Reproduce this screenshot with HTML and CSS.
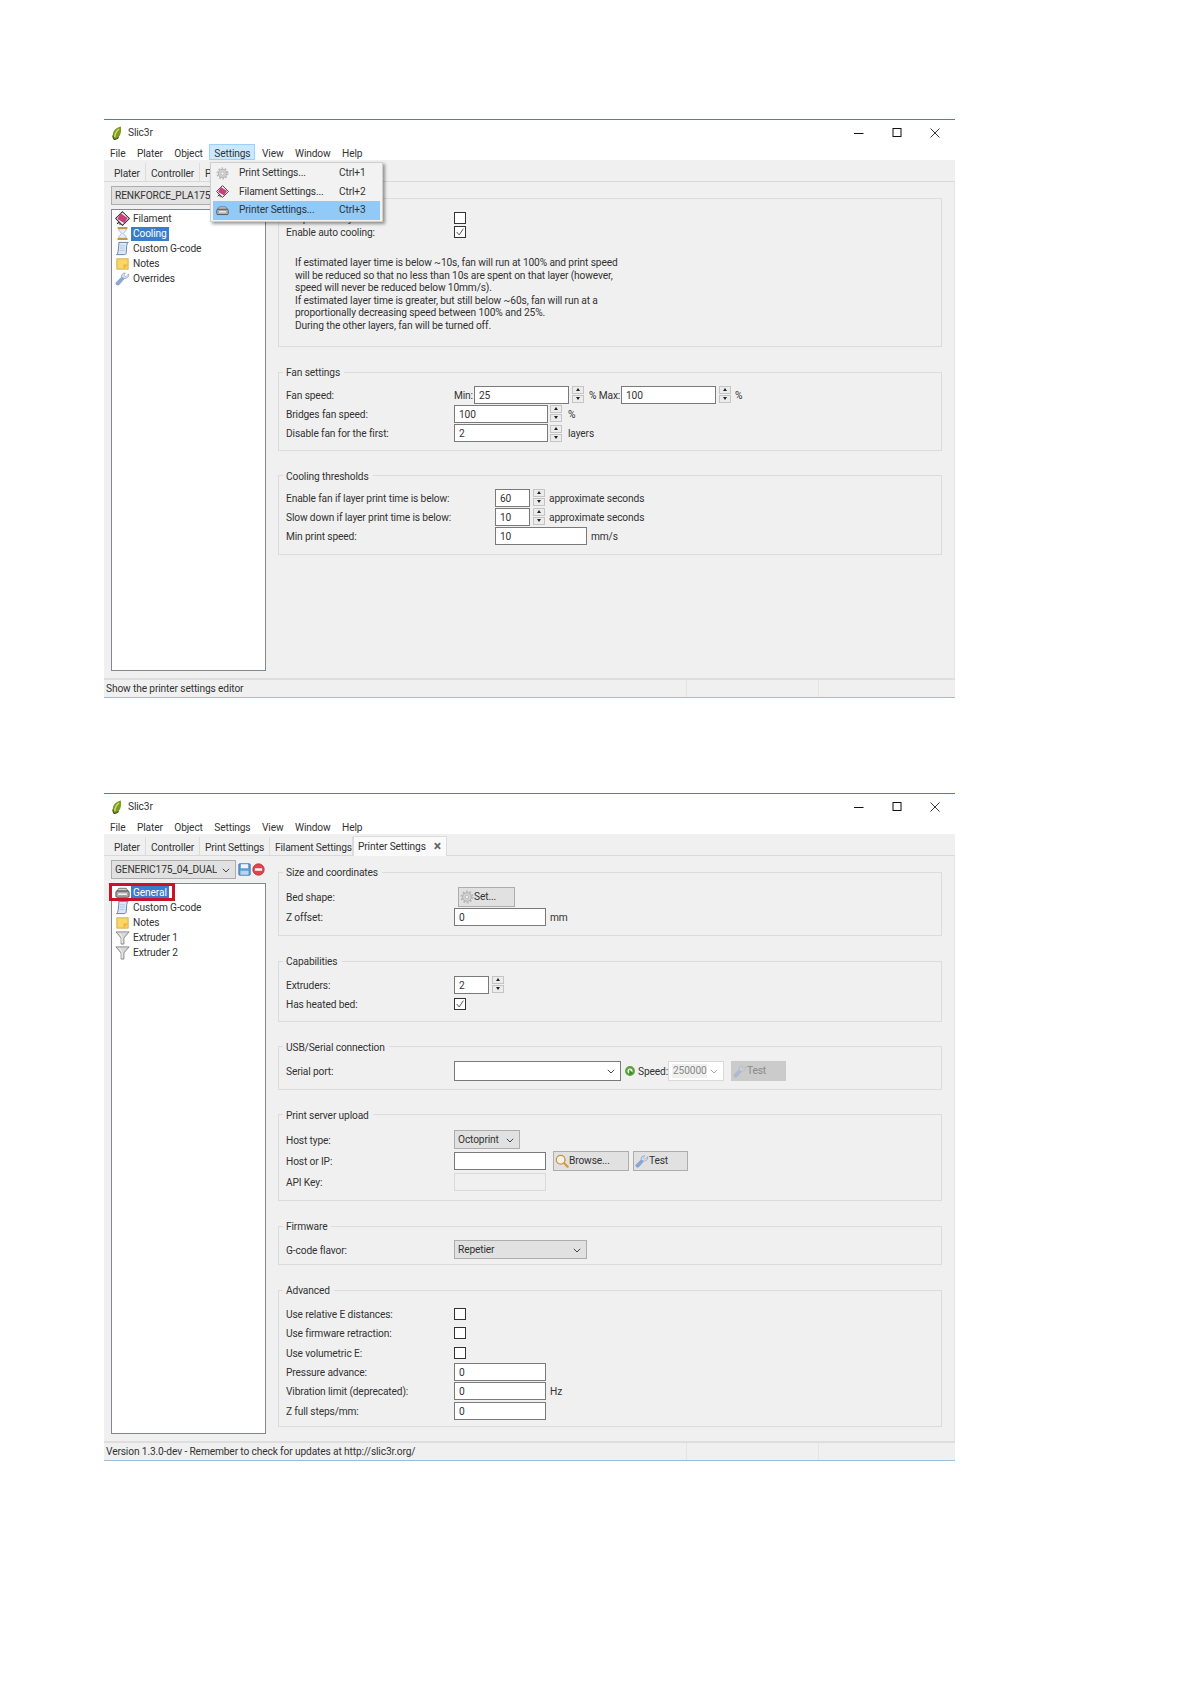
FILE: index.html
```html
<!DOCTYPE html>
<html lang="en">
<head>
<meta charset="utf-8">
<title>Slic3r settings</title>
<link rel="stylesheet" href="styles.css">
</head>
<body>
<svg class="defs" width="0" height="0" aria-hidden="true">
  <symbol id="i-leaf" viewBox="0 0 10 14"><path d="M8.800.5C4 1.500.5 5 .8 9.500c.1 2 .7 3.300 1.500 4 4.700-.5 7.800-6 6.500-13z" fill="#7d9a22"/><path d="M7 3C4.500 5 3 8 2.800 11" stroke="#d0dc70" stroke-width="1.500" fill="none"/><path d="M.8 9.500c.1 2 .7 3.300 1.500 4 1.700-.2 3.100-1 4.300-2.200" stroke="#3f4f14" stroke-width="1.200" fill="none"/></symbol>
  <symbol id="i-filament" viewBox="0 0 16 16"><path d="M8 .8 15.2 8 8 15.2.8 8z" fill="#fff" stroke="#222" stroke-width="1.100"/><path d="M6 2.500 13.500 7.500 10 13 2.500 8.500z" fill="#c93f7c"/><path d="M3 12l3 3M2 14l2-2" stroke="#222"/></symbol>
  <symbol id="i-hourglass" viewBox="0 0 16 16"><path d="M4 3h8v1.500L8.800 8 12 11.500V13H4v-1.500L7.200 8 4 4.500z" fill="#e8eef8" stroke="#8fa8cf" stroke-width=".8"/><rect x="2.500" y="1" width="11" height="2.200" rx="1" fill="#c9964f"/><rect x="2.500" y="12.800" width="11" height="2.200" rx="1" fill="#c9964f"/></symbol>
  <symbol id="i-scroll" viewBox="0 0 16 16"><path d="M4 1.500h10c-1 1-1.500 2-1.500 3.500L12 12.500c-.2 1.500-1 2-2 2H1.500c1-.5 1.500-1.500 1.700-3L4 5C4.100 3.500 4 2.500 4 1.500z" fill="#dbe7f6" stroke="#5d7fae"/><path d="M5.500 5h5M5.200 7.500h5M5 10h5" stroke="#9fb6d6" stroke-width=".7"/></symbol>
  <symbol id="i-note" viewBox="0 0 16 16"><rect x="2" y="3" width="12" height="11" fill="#f7d765" stroke="#dca94a"/><path d="M14 9l-5 5V9z" fill="#f2b63c"/></symbol>
  <symbol id="i-wrench" viewBox="0 0 16 16"><path d="M3 15c-1.500 0-2.500-1.200-2-2.500l6-6c-.5-2 1-4.500 4-4.500L9.500 4l1 2 2-.5L14.500 3c.5 3-2 5.500-4.500 5L4.500 14.500c-.4.400-1 .5-1.500.5z" fill="#8ba7d4" stroke="#6c88b7" stroke-width=".5"/><path d="M7.500 6.500c-.5-2 1-4 3-4.200L9.500 4l1 2 2-.5 1.500-2c.4 2-1 4-3 4.400z" fill="#d8dde6"/></symbol>
  <symbol id="i-printer" viewBox="0 0 16 16"><path d="M4 3.500h8l2 3H2z" fill="#cfcfcf" stroke="#555" stroke-width=".8"/><rect x="1" y="6.500" width="14" height="6.500" rx="1" fill="#b9b9b9" stroke="#444"/><rect x="3" y="8.500" width="10" height="2.500" fill="#f0f0f0" stroke="#777" stroke-width=".5"/></symbol>
  <symbol id="i-gear" viewBox="0 0 16 16"><circle cx="8" cy="8" r="5" fill="#d2d2d2" stroke="#a8a8a8"/><circle cx="8" cy="8" r="6.300" fill="none" stroke="#b8b8b8" stroke-width="2.200" stroke-dasharray="2 1.960"/><circle cx="8" cy="8" r="2" fill="#efefef" stroke="#aaa" stroke-width=".7"/></symbol>
  <symbol id="i-funnel" viewBox="0 0 16 16"><path d="M1 2h14L9.500 8.500V15H6.500V8.500z" fill="#d8d8d8" stroke="#888"/><path d="M5 3.500 7.500 8v6" stroke="#f4f4f4" fill="none"/></symbol>
  <symbol id="i-save" viewBox="0 0 16 16"><rect x="1" y="1" width="14" height="14" rx="1" fill="#5b9bd8" stroke="#3d6fa8"/><rect x="3.500" y="1.500" width="9" height="5" fill="#eef5fb"/><rect x="3" y="9.500" width="10" height="5" fill="#b8d5ee"/></symbol>
  <symbol id="i-delete" viewBox="0 0 16 16"><circle cx="8" cy="8" r="7" fill="#e2444d" stroke="#b62a33"/><rect x="3.500" y="6.500" width="9" height="3" fill="#fff"/></symbol>
  <symbol id="i-reload" viewBox="0 0 16 16"><circle cx="8" cy="8" r="5" fill="none" stroke="#5aa63a" stroke-width="3.200"/><path d="M7 6l5 4.500L7 14z" fill="#3e8a24"/></symbol>
  <symbol id="i-search" viewBox="0 0 16 16"><circle cx="6.500" cy="6.500" r="5" fill="#f3f1e6" stroke="#c8924a" stroke-width="1.500"/><path d="M10.500 10.500l4 4" stroke="#d99a3c" stroke-width="2.600" stroke-linecap="round"/></symbol>
  <symbol id="i-chevron" viewBox="0 0 8 5"><path d="M.8.8 4 4l3.200-3.200" fill="none" stroke="currentColor"/></symbol>
</svg>

<section class="window window-cooling">
  <header class="titlebar">
    <svg class="app-icon"><use href="#i-leaf"/></svg><span class="app-name">Slic3r</span>
    <div class="window-controls">
      <svg viewBox="0 0 10 10"><path d="M0 5.500h9.500" stroke="#111"/></svg>
      <svg viewBox="0 0 10 10"><rect x="1" y=".5" width="8" height="8" fill="none" stroke="#111"/></svg>
      <svg viewBox="0 0 10 10"><path d="M.5.500l9 9M9.500.500l-9 9" stroke="#222" stroke-width=".9"/></svg>
    </div>
  </header>
  <nav class="menubar">
    <span class="menu-item">File</span><span class="menu-item">Plater</span><span class="menu-item">Object</span><span class="menu-item is-open">Settings</span><span class="menu-item">View</span><span class="menu-item">Window</span><span class="menu-item">Help</span>
  </nav>
  <div class="tabs">
    <span class="tab tab-plater">Plater</span><span class="tab tab-controller">Controller</span><span class="tab tab-print">Print Settings</span><span class="tab tab-filament">Filament Settings</span>
  </div>
  <div class="body">
    <aside class="sidebar">
      <div class="preset-row">
        <div class="select preset"><span>RENKFORCE_PLA175_04</span><svg class="chevron"><use href="#i-chevron"/></svg></div>
        <svg class="mini-icon"><use href="#i-save"/></svg><svg class="mini-icon"><use href="#i-delete"/></svg>
      </div>
      <ul class="tree">
        <li class="tree-item"><svg class="tree-icon"><use href="#i-filament"/></svg><span class="tree-label">Filament</span></li>
        <li class="tree-item"><svg class="tree-icon"><use href="#i-hourglass"/></svg><span class="tree-label is-selected">Cooling</span></li>
        <li class="tree-item"><svg class="tree-icon"><use href="#i-scroll"/></svg><span class="tree-label">Custom G-code</span></li>
        <li class="tree-item"><svg class="tree-icon"><use href="#i-note"/></svg><span class="tree-label">Notes</span></li>
        <li class="tree-item"><svg class="tree-icon"><use href="#i-wrench"/></svg><span class="tree-label">Overrides</span></li>
      </ul>
    </aside>
    <main class="settings">
      <fieldset class="group pad-7-14">
        <legend>Enable</legend>
        <div class="row row-tight"><span class="label">Keep fan always on:</span><span class="check"></span></div>
        <div class="row row-tight"><span class="label">Enable auto cooling:</span><span class="check is-checked"><svg viewBox="0 0 12 12"><path d="M2 6l3 3.500L10 2" fill="none" stroke="#333"/></svg></span></div>
        <p class="description">If estimated layer time is below ~10s, fan will run at 100% and print speed<br>will be reduced so that no less than 10s are spent on that layer (however,<br>speed will never be reduced below 10mm/s).<br>If estimated layer time is greater, but still below ~60s, fan will run at a<br>proportionally decreasing speed between 100% and 25%.<br>During the other layers, fan will be turned off.</p>
      </fieldset>
      <fieldset class="group pad-7-7">
        <legend>Fan settings</legend>
        <div class="row"><span class="label">Fan speed:</span><span class="inline-text min-label">Min:</span><span class="input fan-input">25</span><span class="spinner"><i></i><i class="down"></i></span><span class="inline-text pct-max">% Max:</span><span class="input fan-input">100</span><span class="spinner"><i></i><i class="down"></i></span><span class="unit">%</span></div>
        <div class="row"><span class="label">Bridges fan speed:</span><span class="input wide-spin">100</span><span class="spinner"><i></i><i class="down"></i></span><span class="unit">%</span></div>
        <div class="row"><span class="label">Disable fan for the first:</span><span class="input wide-spin">2</span><span class="spinner"><i></i><i class="down"></i></span><span class="unit">layers</span></div>
      </fieldset>
      <fieldset class="group pad-6-8 threshold">
        <legend>Cooling thresholds</legend>
        <div class="row"><span class="label">Enable fan if layer print time is below:</span><span class="input narrow">60</span><span class="spinner"><i></i><i class="down"></i></span><span class="unit">approximate seconds</span></div>
        <div class="row"><span class="label">Slow down if layer print time is below:</span><span class="input narrow">10</span><span class="spinner"><i></i><i class="down"></i></span><span class="unit">approximate seconds</span></div>
        <div class="row"><span class="label">Min print speed:</span><span class="input wide">10</span><span class="unit">mm/s</span></div>
      </fieldset>
    </main>
  </div>
  <footer class="statusbar"><span class="status-main">Show the printer settings editor</span><span class="status-cell"></span><span class="status-cell"></span></footer>

  <div class="popup">
    <div class="popup-item"><svg class="popup-icon"><use href="#i-gear"/></svg><span class="popup-label">Print Settings...</span><span>Ctrl+1</span></div>
    <div class="popup-item"><svg class="popup-icon"><use href="#i-filament"/></svg><span class="popup-label">Filament Settings...</span><span>Ctrl+2</span></div>
    <div class="popup-item is-active"><svg class="popup-icon"><use href="#i-printer"/></svg><span class="popup-label">Printer Settings...</span><span>Ctrl+3</span></div>
  </div>
</section>

<section class="window window-printer">
  <header class="titlebar">
    <svg class="app-icon"><use href="#i-leaf"/></svg><span class="app-name">Slic3r</span>
    <div class="window-controls">
      <svg viewBox="0 0 10 10"><path d="M0 5.500h9.500" stroke="#111"/></svg>
      <svg viewBox="0 0 10 10"><rect x="1" y=".5" width="8" height="8" fill="none" stroke="#111"/></svg>
      <svg viewBox="0 0 10 10"><path d="M.5.500l9 9M9.500.500l-9 9" stroke="#222" stroke-width=".9"/></svg>
    </div>
  </header>
  <nav class="menubar">
    <span class="menu-item">File</span><span class="menu-item">Plater</span><span class="menu-item">Object</span><span class="menu-item">Settings</span><span class="menu-item">View</span><span class="menu-item">Window</span><span class="menu-item">Help</span>
  </nav>
  <div class="tabs">
    <span class="tab tab-plater">Plater</span><span class="tab tab-controller">Controller</span><span class="tab tab-print">Print Settings</span><span class="tab tab-filament">Filament Settings</span><span class="tab tab-active">Printer Settings<b class="tab-close">×</b></span>
  </div>
  <div class="body">
    <aside class="sidebar">
      <div class="preset-row">
        <div class="select preset"><span>GENERIC175_04_DUAL</span><svg class="chevron"><use href="#i-chevron"/></svg></div>
        <svg class="mini-icon"><use href="#i-save"/></svg><svg class="mini-icon"><use href="#i-delete"/></svg>
      </div>
      <ul class="tree">
        <li class="tree-item"><svg class="tree-icon"><use href="#i-printer"/></svg><span class="tree-label is-selected">General</span></li>
        <li class="tree-item"><svg class="tree-icon"><use href="#i-scroll"/></svg><span class="tree-label">Custom G-code</span></li>
        <li class="tree-item"><svg class="tree-icon"><use href="#i-note"/></svg><span class="tree-label">Notes</span></li>
        <li class="tree-item"><svg class="tree-icon"><use href="#i-funnel"/></svg><span class="tree-label">Extruder 1</span></li>
        <li class="tree-item"><svg class="tree-icon"><use href="#i-funnel"/></svg><span class="tree-label">Extruder 2</span></li>
        <li class="callout"></li>
      </ul>
    </aside>
    <main class="settings">
      <fieldset class="group pad-9-9">
        <legend>Size and coordinates</legend>
        <div class="row row-tall"><span class="label">Bed shape:</span><span class="button set-button"><svg class="button-icon"><use href="#i-gear"/></svg>Set...</span></div>
        <div class="row"><span class="label">Z offset:</span><span class="input wide">0</span><span class="unit">mm</span></div>
      </fieldset>
      <fieldset class="group pad-8-7">
        <legend>Capabilities</legend>
        <div class="row"><span class="label">Extruders:</span><span class="input narrow">2</span><span class="spinner"><i></i><i class="down"></i></span></div>
        <div class="row"><span class="label">Has heated bed:</span><span class="check is-checked"><svg viewBox="0 0 12 12"><path d="M2 6l3 3.500L10 2" fill="none" stroke="#333"/></svg></span></div>
      </fieldset>
      <fieldset class="group pad-8-8">
        <legend>USB/Serial connection</legend>
        <div class="row row-tall"><span class="label">Serial port:</span><span class="select serial"><span></span><svg class="chevron"><use href="#i-chevron"/></svg></span><svg class="reload"><use href="#i-reload"/></svg><span class="speed-label">Speed:</span><span class="select speed"><span class="speed-value">250000</span><svg class="chevron"><use href="#i-chevron"/></svg></span><span class="button is-disabled"><svg class="button-icon"><use href="#i-wrench"/></svg>Test</span></div>
      </fieldset>
      <fieldset class="group pad-9-9">
        <legend>Print server upload</legend>
        <div class="row row-tall"><span class="label">Host type:</span><span class="select host-type"><span>Octoprint</span><svg class="chevron"><use href="#i-chevron"/></svg></span></div>
        <div class="row row-host"><span class="label">Host or IP:</span><span class="input wide"></span><span class="button browse"><svg class="button-icon"><use href="#i-search"/></svg>Browse...</span><span class="button test"><svg class="button-icon"><use href="#i-wrench"/></svg>Test</span></div>
        <div class="row"><span class="label">API Key:</span><span class="input wide is-disabled"></span></div>
      </fieldset>
      <fieldset class="group pad-8-5">
        <legend>Firmware</legend>
        <div class="row"><span class="label">G-code flavor:</span><span class="select flavor"><span>Repetier</span><svg class="chevron"><use href="#i-chevron"/></svg></span></div>
      </fieldset>
      <fieldset class="group pad-8-6">
        <legend>Advanced</legend>
        <div class="row"><span class="label">Use relative E distances:</span><span class="check"></span></div>
        <div class="row"><span class="label">Use firmware retraction:</span><span class="check"></span></div>
        <div class="row"><span class="label">Use volumetric E:</span><span class="check"></span></div>
        <div class="row"><span class="label">Pressure advance:</span><span class="input wide">0</span></div>
        <div class="row"><span class="label">Vibration limit (deprecated):</span><span class="input wide">0</span><span class="unit">Hz</span></div>
        <div class="row"><span class="label">Z full steps/mm:</span><span class="input wide">0</span></div>
      </fieldset>
    </main>
  </div>
  <footer class="statusbar"><span class="status-main">Version 1.3.0-dev - Remember to check for updates at http://slic3r.org/</span><span class="status-cell"></span><span class="status-cell"></span></footer>
</section>
</body>
</html>
```

FILE: styles.css
```css
* { box-sizing: border-box; }
html, body { margin: 0; background: #fff; }
body {
  padding: 119px 0 0 104px;
  width: 1191px;
  height: 1684px;
  overflow: hidden;
  font: 10.2px/14px Roboto, "Open Sans", sans-serif;
  letter-spacing: -.13px;
  color: #333;
}
.defs { position: absolute; }

/* window frame */
.window {
  position: relative;
  display: flex;
  flex-direction: column;
  width: 851px;
  background: #fff;
  border-top: 1px solid #4f81a8;
  border-bottom: 1px solid #9dbcd8;
}
.window-cooling { height: 579px; margin-bottom: 95px; }
.window-printer { height: 668px; }

.titlebar { display: flex; align-items: center; height: 24px; padding: 2px 15px 0 8px; flex: none; }
.app-icon { width: 10px; height: 14px; flex: none; }
.app-name { margin-left: 6px; }
.window-controls { margin-left: auto; display: flex; gap: 28px; }
.window-controls svg { width: 10px; height: 10px; display: block; }

.menubar { display: flex; height: 16px; flex: none; align-items: center; padding-left: 1px; }
.menu-item { padding: 0 4px; height: 16px; line-height: 17px; margin-right: 1.5px; border: 1px solid transparent; }
.menu-item.is-open { background: #cce8ff; border-color: #99d1ff; }

.tabs { display: flex; align-items: flex-end; height: 21px; flex: none; background: #f0f0f0; padding-left: 1px; }
.tab { height: 18px; line-height: 16px; padding: 3px 4px 0 5px; border-right: 1px solid #dcdcdc; white-space: nowrap; }
.tab-plater { width: 41px; padding-left: 9px; }
.tab-controller { width: 54px; }
.tab-print { width: 70px; }
.tab-filament { width: 83px; }
.tab-active {
  position: relative;
  top: 1px;
  display: flex;
  width: 94px;
  height: 20px;
  line-height: 19px;
  padding: 0 4px 0 4px;
  background: #fafafa;
  border: 1px solid #dcdcdc;
  border-bottom: 0;
}
.tab-close { margin-left: auto; margin-right: 1px; font-size: 14px; color: #666; }

.body {
  flex: 1;
  min-height: 0;
  display: flex;
  background: #f0f0f0;
  border-top: 1px solid #d9d9d9;
  border-right: 1px solid #e4e4e4;
}
.sidebar { display: flex; flex-direction: column; width: 167px; padding: 4px 0 7px 7px; flex: none; }
.preset-row { display: flex; align-items: center; height: 19px; flex: none; }
.preset { width: 125px; }
.preset span { overflow: hidden; white-space: nowrap; }
.mini-icon { width: 13px; height: 13px; margin-left: 2px; }
.mini-icon + .mini-icon { margin-left: 1px; }

.tree {
  position: relative;
  flex: 1;
  list-style: none;
  margin: 4px 0 0;
  padding: 1px 0 0 3px;
  width: 155px;
  background: #fff;
  border: 1px solid #828790;
}
.tree-item { display: flex; align-items: center; height: 15px; }
.tree-icon { width: 15px; height: 15px; flex: none; }
.tree-label { margin-left: 1px; padding: 0 2px; line-height: 14px; }
.tree-label.is-selected { background: #3b7ccb; color: #fff; }
.callout {
  position: absolute;
  left: -3px;
  top: -1px;
  width: 66px;
  height: 18px;
  border: 3px solid #c8132b;
}

/* settings groups */
.settings { flex: 1; padding-top: 8px; margin-left: 7px; margin-right: 12px; min-width: 0; }
.group {
  margin: 0 0 17px;
  padding: 0 7px;
  border: 1px solid #dcdcdc;
  min-width: 0;
}
.group legend { padding: 2px 4px 0 3px; margin: 0 0 -2px -3px; line-height: 14px; }
.pad-7-14 { padding-top: 7px; padding-bottom: 14px; }
.pad-7-7 { padding-top: 7px; padding-bottom: 7px; }
.pad-8-6 { padding-top: 8px; padding-bottom: 6px; }
.pad-6-8 { padding-top: 6px; padding-bottom: 8px; }
.pad-9-9 { padding-top: 9px; padding-bottom: 9px; }
.pad-8-7 { padding-top: 8px; padding-bottom: 7px; }
.pad-8-8 { padding-top: 8px; padding-bottom: 8px; }
.pad-8-5 { padding-top: 8px; padding-bottom: 5px; }

.row { display: flex; align-items: center; height: 19.3px; white-space: nowrap; }
.row-tight { height: 14px; }
.row-tall { height: 20px; }
.row-host { height: 22px; }
.label { width: 168px; flex: none; padding-top: 2px; }
.threshold .label { width: 209px; }

.description { margin: 18px 0 0 9px; line-height: 12.5px; white-space: nowrap; }

.check {
  display: block;
  width: 12px;
  height: 12px;
  background: #fff;
  border: 1px solid #333;
}
.check svg { display: block; width: 10px; height: 10px; }

.input {
  display: block;
  height: 18px;
  line-height: 18px;
  padding-left: 4px;
  background: #fff;
  border: 1px solid #7a7a7a;
  flex: none;
}
.input.is-disabled { background: #f0f0f0; border-color: #d9d9d9; }
.wide { width: 92px; }
.wide-spin { width: 94px; }
.narrow { width: 35px; }
.fan-input { width: 95px; }
.min-label { width: 20px; padding-top: 2px; }
.pct-max { margin-left: 5px; width: 32px; padding-top: 2px; }
.inline-text { flex: none; }
.unit { margin-left: 4px; padding-top: 2px; }
.wide-spin + .spinner { margin-left: 2px; }
.wide-spin + .spinner + .unit { margin-left: 6px; }

.spinner { display: flex; flex-direction: column; gap: 1px; width: 12px; margin-left: 3px; flex: none; }
.spinner i {
  position: relative;
  display: block;
  height: 8px;
  background: #ececec;
  border: 1px solid #c4c4c4;
}
.spinner i::after {
  content: "";
  position: absolute;
  left: 3px;
  top: 1px;
  border-left: 2px solid transparent;
  border-right: 2px solid transparent;
  border-bottom: 3px solid #222;
}
.spinner i.down::after { border-bottom: 0; border-top: 3px solid #222; }

.select {
  display: flex;
  align-items: center;
  justify-content: space-between;
  height: 19px;
  padding: 1px 5px 0 3px;
  background: #e1e1e1;
  border: 1px solid #adadad;
  flex: none;
}
.chevron { width: 8px; height: 5px; color: #444; flex: none; }
.serial { width: 167px; height: 20px; background: #fff; border-color: #7a7a7a; }
.host-type { width: 66px; }
.flavor { width: 133px; }
.speed { width: 56px; height: 20px; background: #fff; border-color: #d9d9d9; color: #888; }
.speed .chevron { color: #aaa; }
.speed-value { background: #f0f0f0; padding-left: 1px; }
.reload { width: 12px; height: 12px; margin-left: 3px; flex: none; }
.speed-label { margin-left: 2px; width: 30px; padding-top: 2px; }

.button {
  display: flex;
  align-items: center;
  width: 55px;
  height: 20px;
  padding-left: 1px;
  background: #e1e1e1;
  border: 1px solid #adadad;
  flex: none;
}
.button-icon { width: 14px; height: 14px; flex: none; }
.button.is-disabled { margin-left: 7px; background: #cbcbcb; border-color: #cbcbcb; color: #8a8a8a; }
.button.is-disabled .button-icon { opacity: .45; }
.set-button { width: 57px; margin-left: 4px; }
.browse { width: 76px; margin-left: 7px; }
.test { margin-left: 4px; }

.statusbar { display: flex; height: 19px; flex: none; background: #f0f0f0; border-top: 2px solid #dedede; line-height: 17px; }
.status-main { width: 582px; padding-left: 2px; }
.status-cell { width: 132px; border-left: 1px solid #e4e4e4; }

/* open menu */
.popup {
  position: absolute;
  left: 106px;
  top: 42px;
  width: 173px;
  height: 60px;
  padding: 1px 2px 0;
  background: #f2f2f2;
  border: 1px solid #cfcfcf;
  box-shadow: 2px 2px 3px rgba(0, 0, 0, .4);
}
.popup-item { display: flex; align-items: center; height: 18.5px; padding-left: 3px; }
.popup-item.is-active { background: #91c9f7; }
.popup-icon { width: 13px; height: 13px; flex: none; }
.popup-label { margin-left: 10px; width: 100px; }
```
